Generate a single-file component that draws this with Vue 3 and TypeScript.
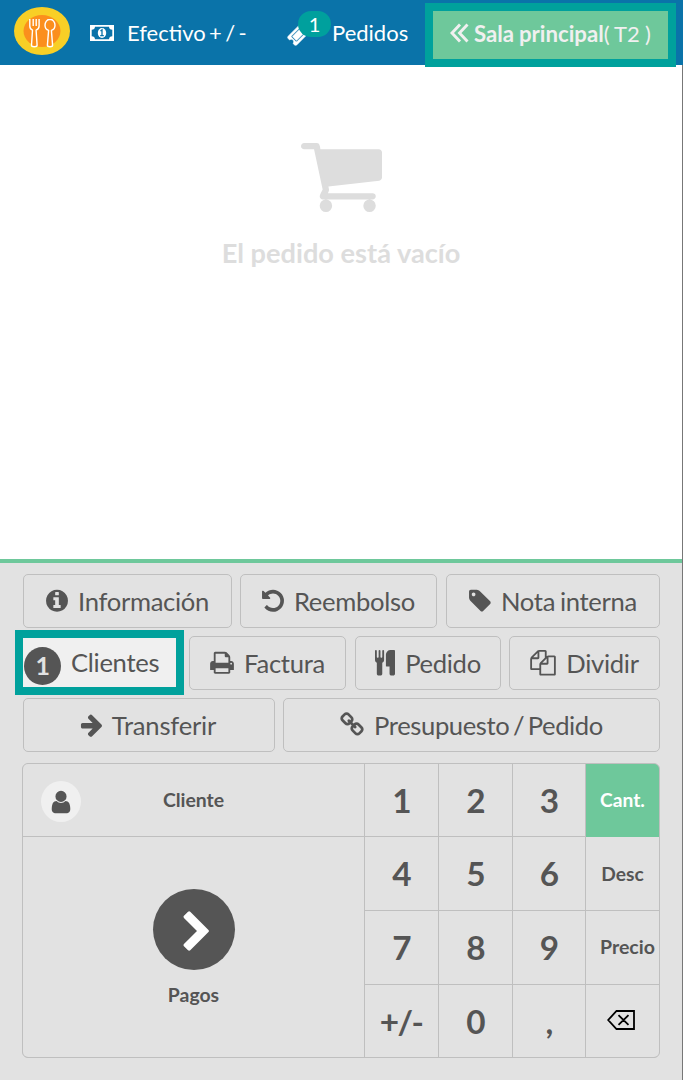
<script setup lang="ts">
interface Icon {
  box: string
  width: number
  path: string
}

interface Action {
  label: string
  icon?: Icon
  badge?: string
}

const icons: Record<string, Icon> = {
  info: {
    box: '128 0 1536 1792',
    width: 22,
    path: 'M1152 1376v-160q0-14-9-23t-23-9h-96v-512q0-14-9-23t-23-9h-320q-14 0-23 9t-9 23v160q0 14 9 23t23 9h96v320h-96q-14 0-23 9t-9 23v160q0 14 9 23t23 9h448q14 0 23-9t9-23zm-128-896v-160q0-14-9-23t-23-9h-192q-14 0-23 9t-9 23v160q0 14 9 23t23 9h192q14 0 23-9t9-23zm640 416q0 209-103 385.5t-279.5 279.5-385.5 103-385.5-103-279.5-279.5-103-385.5 103-385.5 279.5-279.5 385.5-103 385.5 103 279.5 279.5 103 385.5z',
  },
  undo: {
    box: '128 0 1536 1792',
    width: 22,
    path: 'M1664 896q0 156-61 298t-164 245-245 164-298 61q-172 0-327-72.5t-264-204.5q-7-10-6.5-22.5t8.5-20.5l137-138q10-9 25-9 16 2 23 12 73 95 179 147t225 52q104 0 198.5-40.5t163.5-109.5 109.5-163.5 40.5-198.5-40.5-198.5-109.5-163.5-163.5-109.5-198.5-40.5q-98 0-188 35.5t-160 101.5l137 138q31 30 14 69-17 40-59 40h-448q-26 0-45-19t-19-45v-448q0-42 40-59 39-17 69 14l130 129q107-101 244.5-156.5t284.5-55.5q156 0 298 61t245 164 164 245 61 298z',
  },
  tag: {
    box: '128 0 1536 1792',
    width: 22,
    path: 'M576 448q0-53-37.5-90.5t-90.5-37.5-90.5 37.5-37.5 90.5 37.5 90.5 90.5 37.5 90.5-37.5 37.5-90.5zm1067 576q0 53-37 90l-491 492q-39 37-91 37-53 0-90-37l-715-716q-38-37-64.5-101t-26.5-117v-416q0-52 38-90t90-38h416q53 0 117 26.5t102 64.5l715 714q37 39 37 91z',
  },
  print: {
    box: '64 0 1664 1792',
    width: 24,
    path: 'M448 1536h896v-256h-896v256zm0-640h896v-384h-160q-40 0-68-28t-28-68v-160h-640v640zm1152 64q0-26-19-45t-45-19-45 19-19 45 19 45 45 19 45-19 19-45zm128 0v416q0 13-9.5 22.5t-22.5 9.5h-224v160q0 40-28 68t-68 28h-960q-40 0-68-28t-28-68v-160h-224q-13 0-22.5-9.5t-9.5-22.5v-416q0-79 56.5-135.5t135.5-56.5h64v-544q0-40 28-68t68-28h672q40 0 88 20t76 48l152 152q28 28 48 76t20 88v256h64q79 0 135.5 56.5t56.5 135.5z',
  },
  cutlery: {
    box: '192 0 1408 1792',
    width: 20,
    path: 'M832 64v640q0 61-35.5 111t-92.5 70v779q0 52-38 90t-90 38h-128q-52 0-90-38t-38-90v-779q-57-20-92.5-70t-35.5-111v-640q0-26 19-45t45-19 45 19 19 45v416q0 26 19 45t45 19 45-19 19-45v-416q0-26 19-45t45-19 45 19 19 45v416q0 26 19 45t45 19 45-19 19-45v-416q0-26 19-45t45-19 45 19 19 45zm768 0v1600q0 52-38 90t-90 38h-128q-52 0-90-38t-38-90v-512h-224q-13 0-22.5-9.5t-9.5-22.5v-800q0-132 94-226t226-94h256q26 0 45 19t19 45z',
  },
  files: {
    box: '0 0 1792 1792',
    width: 26,
    path: 'M1696 384q40 0 68 28t28 68v1216q0 40-28 68t-68 28h-960q-40 0-68-28t-28-68v-288h-544q-40 0-68-28t-28-68v-672q0-40 20-88t48-76l408-408q28-28 76-48t88-20h416q40 0 68 28t28 68v328q68-40 128-40h416zm-544 213l-299 299h299v-299zm-640-384l-299 299h299v-299zm196 647l316-316v-416h-384v416q0 40-28 68t-68 28h-416v640h512v-256q0-40 20-88t48-76zm956 804v-1152h-384v416q0 40-28 68t-68 28h-416v640h896z',
  },
  arrow: {
    box: '64 0 1536 1792',
    width: 22,
    path: 'M1600 960q0 54-37 91l-651 651q-39 37-91 37-51 0-90-37l-75-75q-38-38-38-91t38-91l293-293h-704q-52 0-84.5-37.5t-32.5-90.5v-128q0-53 32.5-90.5t84.5-37.5h704l-293-294q-38-36-38-90t38-90l75-75q38-38 90-38 53 0 91 38l651 651q37 35 37 90z',
  },
  chain: {
    box: '64 0 1664 1792',
    width: 24,
    path: 'M1520 1216q0-40-28-68l-208-208q-28-28-68-28-42 0-72 32 3 3 19 18.5t21.5 21.5 15 19 13 25.5 3.5 27.5q0 40-28 68t-68 28q-15 0-27.5-3.5t-25.5-13-19-15-21.5-21.5-18.5-19q-33 31-33 73 0 40 28 68l206 207q27 27 68 27 40 0 68-26l147-146q28-28 28-67zm-703-705q0-40-28-68l-206-207q-28-28-68-28-39 0-68 27l-147 146q-28 28-28 67 0 40 28 68l208 208q27 27 68 27 42 0 72-31-3-3-19-18.5t-21.5-21.5-15-19-13-25.5-3.5-27.5q0-40 28-68t68-28q15 0 27.5 3.5t25.5 13 19 15 21.5 21.5 18.5 19q33-31 33-73zm895 705q0 120-85 203l-147 146q-83 83-203 83-121 0-204-85l-206-207q-83-83-83-203 0-123 88-209l-88-88q-86 88-208 88-120 0-204-84l-208-208q-84-84-84-204t85-203l147-146q83-83 203-83 121 0 204 85l206 207q83 83 83 203 0 123-88 209l88 88q86-88 208-88 120 0 204 84l208 208q84 84 84 204z',
  },
}

const rows: Action[][] = [
  [
    { label: 'Información', icon: icons.info },
    { label: 'Reembolso', icon: icons.undo },
    { label: 'Nota interna', icon: icons.tag },
  ],
  [
    { label: 'Clientes', badge: '1' },
    { label: 'Factura', icon: icons.print },
    { label: 'Pedido', icon: icons.cutlery },
    { label: 'Dividir', icon: icons.files },
  ],
  [
    { label: 'Transferir', icon: icons.arrow },
    { label: 'Presupuesto / Pedido', icon: icons.chain },
  ],
]

const keys: string[] = [
  '1', '2', '3', 'Cant.',
  '4', '5', '6', 'Desc',
  '7', '8', '9', 'Precio',
  '+/-', '0', ',', 'del',
]

const modes = ['Cant.', 'Desc', 'Precio']
</script>

<template>
  <div class="pos">
    <header class="topbar">
      <svg class="logo" width="56" height="48" viewBox="0 0 56 48">
        <ellipse cx="28" cy="24" rx="28" ry="24" fill="#f8cf26" />
        <ellipse cx="28" cy="24" rx="18.5" ry="16" fill="#fb8f1d" />
        <g fill="#fb8f1d" stroke="#fff" stroke-width="1.4" stroke-linejoin="round">
          <path d="M15.8 12v7q0 3 2.7 4.2l-1 15q0 1.5 2.8 1.5t2.8-1.5l-1-15q3-1.200 3-4.200v-7M19.200 12v7M22.200 12v7" />
          <path d="M36 12.200c-3 0-5 3-5 6 0 2.500 1.500 4.500 3.600 5.200l-1.200 14.800q0 1.500 2.600 1.500t2.600-1.500l-1.200-14.800c2.100-.7 3.600-2.700 3.600-5.200 0-3-2-6-5-6z" />
        </g>
      </svg>
      <svg class="money" width="24" height="16" viewBox="0 0 24 16">
        <path d="M0 0h24v16H0zM5 1.700Q4.800 4.500 1.700 4.700v6.600Q4.800 11.500 5 14.300h14q.2-2.800 3.300-3V4.700Q19.200 4.500 19 1.700z" fill="#fff" fill-rule="evenodd" />
        <ellipse cx="12" cy="8" rx="4.200" ry="5" fill="#fff" />
        <path d="M10.500 6l1.500-1.200v5.700M10.200 10.700h3.600" fill="none" stroke="#0a73a9" stroke-width="1.300" />
      </svg>
      <span class="cash">Efectivo + / -</span>
      <span class="ticket">
        <svg width="22" height="22" viewBox="0 0 1792 1792">
          <path d="M1024 452l316 316-572 572-316-316zm-211 979l618-618q19-19 19-45t-19-45l-362-362q-18-18-45-18t-45 18l-618 618q-19 19-19 45t19 45l362 362q18 18 45 18t45-18zm889-637l-907 908q-37 37-90.500 37t-90.500-37l-126-125q56-56 56-136t-56-136-136-56-136 56l-125-126q-37-37-37-90.500t37-90.500l907-906q37-37 90.500-37t90.500 37l125 125q-56 56-56 136t56 136 136 56 136-56l126 125q37 37 37 90.500t-37 90.500z" fill="#fff" stroke="#fff" stroke-width="50" />
        </svg>
        <b class="count">1</b>
      </span>
      <span class="orders">Pedidos</span>
      <div class="floor">
        <svg width="19" height="20" viewBox="0 0 19 20">
          <path d="M10 1.500L2 10l8 8.500M17.500 1.500L9.500 10l8 8.500" fill="none" stroke="#f0f0f0" stroke-width="2.900" />
        </svg>
        <span><b>Sala principal</b>( T2 )</span>
      </div>
    </header>

    <main class="order">
      <svg class="cart" width="81" height="69" viewBox="64 256 1664 1408" preserveAspectRatio="none">
        <path d="M704 1536q0 52-38 90t-90 38-90-38-38-90 38-90 90-38 90 38 38 90zm896 0q0 52-38 90t-90 38-90-38-38-90 38-90 90-38 90 38 38 90zm128-1088v512q0 24-16.500 42.500t-40.500 21.500l-1044 122q13 60 13 70 0 16-24 64h920q26 0 45 19t19 45-19 45-45 19h-1024q-26 0-45-19t-19-45q0-11 8-31.500t16-36 21.500-40 15.500-29.500l-177-823h-204q-26 0-45-19t-19-45 19-45 45-19h256q16 0 28.500 6.500t19.500 15.500 13 24.500 8 26 5.500 29.500 4.500 26h1201q26 0 45 19t19 45z" fill="#ddd" />
      </svg>
      <p>El pedido está vacío</p>
    </main>

    <section class="controls">
      <div v-for="(row, r) in rows" :key="r" class="row" :class="'row' + (r + 1)">
        <button v-for="a in row" :key="a.label" class="action" :class="{ marked: a.badge }">
          <span v-if="a.badge" class="badge">{{ a.badge }}</span>
          <svg v-if="a.icon" :width="a.icon.width" height="25.600" :viewBox="a.icon.box">
            <path :d="a.icon.path" fill="#555" />
          </svg>
          <span class="label">{{ a.label }}</span>
        </button>
      </div>

      <div class="pad">
        <div class="client">
          <span class="avatar">
            <svg width="26" height="26" viewBox="0 0 1792 1792">
              <path d="M1536 1399q0 109-62.500 187t-150.500 78h-854q-88 0-150.500-78t-62.500-187q0-85 8.500-160.500t31.500-152 58.500-131 94-89 134.500-34.500q131 128 313 128t313-128q76 0 134.500 34.500t94 89 58.500 131 31.500 152 8.500 160.500zm-256-887q0 159-112.500 271.500t-271.500 112.500-271.500-112.500-112.500-271.500 112.500-271.500 271.500-112.500 271.500 112.500 112.500 271.500z" fill="#555" />
            </svg>
          </span>
          <span>Cliente</span>
        </div>
        <div class="pay">
          <span class="go">
            <svg width="44" height="44" viewBox="0 0 1792 1792">
              <path d="M1363 941l-742 742q-19 19-45 19t-45-19l-166-166q-19-19-19-45t19-45l531-531-531-531q-19-19-19-45t19-45l166-166q19-19 45-19t45 19l742 742q19 19 19 45t-19 45z" fill="#fff" />
            </svg>
          </span>
          <span>Pagos</span>
        </div>
        <div
          v-for="k in keys"
          :key="k"
          class="key"
          :class="{ mode: modes.includes(k), active: k === 'Cant.', wide: k === 'Precio', sign: k === '+/-', erase: k === 'del' }"
        >
          <svg v-if="k === 'del'" width="28" height="20" viewBox="0 0 28 20">
            <path d="M9.500 1H27v18H9.500L1.200 10zM11.500 5.200l10 9.600M21.500 5.200l-10 9.600" fill="none" stroke="#000" stroke-width="1.800" />
          </svg>
          <template v-else>{{ k }}</template>
        </div>
      </div>
    </section>
  </div>
</template>

<style>
body {
  margin: 0;
}
</style>

<style scoped>
.pos {
  position: relative;
  box-sizing: border-box;
  width: 683px;
  height: 1080px;
  overflow: hidden;
  display: flex;
  flex-direction: column;
  background: #fff;
  color: #555;
  font-family: Lato, 'Liberation Sans', sans-serif;
}
.pos::after {
  content: '';
  position: absolute;
  top: 65px;
  right: 0;
  bottom: 0;
  width: 1px;
  background: #777;
}
.topbar {
  flex: none;
  box-sizing: border-box;
  height: 65px;
  display: flex;
  align-items: center;
  padding-left: 14px;
  background: #0a73a9;
  color: #fff;
  font-size: 22px;
  white-space: nowrap;
}
.logo {
  margin: -3px 20px 0 0;
}
.money {
  margin-right: 13px;
}
.cash {
  width: 160px;
  word-spacing: -2.300px;
}
.ticket {
  position: relative;
  display: flex;
  height: 22px;
  width: 45px;
  margin-top: 4px;
}
.count {
  position: absolute;
  left: 11px;
  top: -13px;
  width: 33px;
  height: 26px;
  border-radius: 13px;
  background: #00a09d;
  font-size: 20px;
  font-weight: 400;
  line-height: 26px;
  text-align: center;
}
.floor {
  position: absolute;
  left: 425px;
  top: 3px;
  box-sizing: border-box;
  width: 251px;
  height: 64px;
  border: 8px solid #00a19c;
  display: flex;
  align-items: center;
  padding: 0 0 4px 17px;
  gap: 5px;
  background: #6ec89b;
  color: #f0f0f0;
}
.floor span {
  word-spacing: -0.500px;
}
.floor b {
  font-size: 22.200px;
}
.order {
  flex: none;
  box-sizing: border-box;
  height: 494px;
  padding-top: 78px;
  display: flex;
  flex-direction: column;
  align-items: center;
}
.order p {
  margin: 24px 1px 0 0;
  font-size: 27.200px;
  font-weight: 700;
  line-height: 34px;
  color: #ddd;
}
.controls {
  flex: 1;
  box-sizing: border-box;
  border-top: 4px solid #6ec89b;
  padding: 11px 23px 0;
  background: #e2e2e2;
}
.row {
  display: grid;
  height: 54px;
  margin-bottom: 8px;
  column-gap: 8px;
}
.row1 {
  grid-template-columns: 209px 198px 214px;
}
.row2 {
  grid-template-columns: 158px 158px 146px 151px;
}
.row3 {
  grid-template-columns: 252px 377px;
}
.row1 .action:nth-child(2),
.row2 .action:nth-child(2) {
  margin-right: 1px;
}
.action {
  position: relative;
  box-sizing: border-box;
  border: 1px solid #bfbfbf;
  border-radius: 5px;
  padding: 0;
  display: flex;
  align-items: center;
  justify-content: center;
  gap: 10px;
  background: transparent;
  color: #555;
  font-family: inherit;
  font-size: 25.600px;
  line-height: 32px;
  letter-spacing: -0.300px;
  word-spacing: -1.500px;
  white-space: nowrap;
}
.label {
  margin-top: -1px;
}
.row3 .action {
  letter-spacing: -0.400px;
  word-spacing: -2.500px;
}
.row3 .action:first-child {
  padding-right: 2px;
  letter-spacing: -0.200px;
}
.marked {
  justify-content: flex-start;
  border: 0;
  border-radius: 0;
  background: #f0f0f0;
  height: 49px;
  width: 153px;
  margin-top: 2px;
  outline: 8px solid #00a19c;
  z-index: 1;
}
.badge {
  width: 37px;
  height: 38px;
  margin: 7px 0 0 1px;
  border-radius: 50%;
  background: #555;
  color: #e2e2e2;
  font-weight: 700;
  font-size: 25px;
  line-height: 37px;
  text-align: center;
}
.pad {
  box-sizing: border-box;
  width: 638px;
  height: 295px;
  margin: 11px 0 0 -1px;
  border: 1px solid #bfbfbf;
  border-radius: 6px;
  overflow: hidden;
  display: grid;
  grid-template-columns: 341px 73px 73px 72px 73px;
  grid-template-rows: 72px 73px 73px 72px;
  gap: 1px;
  background: #bfbfbf;
  font-size: 19.400px;
  font-weight: 700;
}
.client,
.pay,
.key {
  box-sizing: border-box;
  background: #e2e2e2;
  display: flex;
  align-items: center;
  justify-content: center;
}
.client {
  position: relative;
  grid-column: 1;
  grid-row: 1;
  padding-bottom: 2px;
}
.avatar {
  position: absolute;
  left: 18px;
  top: 17px;
  width: 40px;
  height: 41px;
  border-radius: 50%;
  background: #f0f0f0;
  display: flex;
  align-items: center;
  justify-content: center;
}
.pay {
  grid-column: 1;
  grid-row: 2 / 5;
  flex-direction: column;
  gap: 13px;
  padding-top: 1px;
}
.go {
  box-sizing: border-box;
  width: 82px;
  height: 81px;
  padding: 3px 0 0 7px;
  border-radius: 50%;
  background: #555;
  display: flex;
  align-items: center;
  justify-content: center;
}
.key {
  padding: 0 0 1px 1px;
  font-size: 33.300px;
}
.mode {
  padding: 0 0 1px;
  font-size: 19.200px;
}
.sign {
  padding-right: 2px;
  letter-spacing: -1.500px;
}
.erase {
  padding: 0 4px 2px 0;
}
.wide {
  justify-content: flex-start;
  padding: 0 0 2px 14px;
  font-size: 19.500px;
}
.active {
  margin: 0 -1px -1px 0;
  padding: 0 1px 3px 0;
  background: #6ec89b;
  color: #fff;
  z-index: 1;
}
</style>
